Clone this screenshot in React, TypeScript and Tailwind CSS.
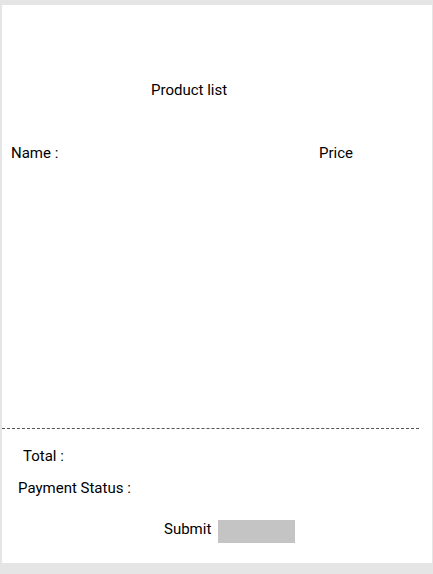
const App = () => {
  return (
    <div className="min-h-[574px] w-full bg-[#e5e5e5] font-['Roboto',sans-serif] text-[15px] text-black">
      {/* header label, mostly scrolled off */}
      <div className="h-[5px] overflow-hidden pl-[3px]">
        <div className="-mt-[17px] leading-[24px] text-[#9a9a9a]">Name :</div>
      </div>

      <div className="ml-[2px] flex h-[558px] w-[430px] flex-col bg-white">
        <div className="pl-[149px] pt-[73px] leading-[24px]">Product list</div>

        <div className="flex pt-[39px] leading-[24px]">
          <span className="pl-[9px]">Name :</span>
          <span className="ml-auto pr-[79px]">Price</span>
        </div>

        <div className="mt-[263px] w-[417px] border-t border-dashed border-[#555]" />

        <div className="pl-[21px] pt-[15px] leading-[24px]">Total :</div>
        <div className="pl-[16px] pt-[8px] leading-[24px]">Payment Status :</div>

        <div className="flex items-start pl-[162px] pt-[17px]">
          <span className="leading-[24px]">Submit</span>
          <button className="ml-[7px] mt-[3px] h-[23px] w-[77px] bg-[#c4c4c4]" />
        </div>
      </div>
    </div>
  );
};

export default App;
